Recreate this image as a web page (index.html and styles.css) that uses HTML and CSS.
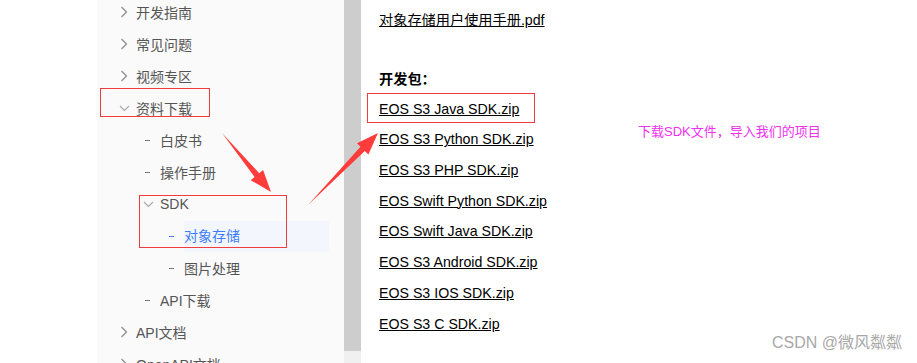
FILE: index.html
```html
<!DOCTYPE html>
<html lang="zh-CN">
<head>
    <meta charset="UTF-8">
    <title>资料下载</title>
    <link rel="stylesheet" href="styles.css">
</head>
<body>
    <div class="page">
        <div class="blank"></div>
        <nav class="sidebar">
            <div class="row lv1"><span class="ico"><svg width="8" height="12" viewBox="0 0 8 12"><path d="M1.5 1 L6.5 6 L1.5 11" fill="none" stroke="#8a8a8a" stroke-width="1.2"/></svg></span>开发指南</div>
            <div class="row lv1"><span class="ico"><svg width="8" height="12" viewBox="0 0 8 12"><path d="M1.5 1 L6.5 6 L1.5 11" fill="none" stroke="#8a8a8a" stroke-width="1.2"/></svg></span>常见问题</div>
            <div class="row lv1"><span class="ico"><svg width="8" height="12" viewBox="0 0 8 12"><path d="M1.5 1 L6.5 6 L1.5 11" fill="none" stroke="#8a8a8a" stroke-width="1.2"/></svg></span>视频专区</div>
            <div class="row lv1"><span class="ico down"><svg width="11" height="7" viewBox="0 0 11 7"><path d="M1 1 L5.5 5.5 L10 1" fill="none" stroke="#aaa" stroke-width="1.2"/></svg></span>资料下载</div>
            <div class="row lv2"><span class="ico"><i class="dash"></i></span>白皮书</div>
            <div class="row lv2"><span class="ico"><i class="dash"></i></span>操作手册</div>
            <div class="row lv2 sdk"><span class="ico down"><svg width="11" height="7" viewBox="0 0 11 7"><path d="M1 1 L5.5 5.5 L10 1" fill="none" stroke="#aaa" stroke-width="1.2"/></svg></span>SDK</div>
            <div class="row lv3 active"><span class="ico"><i class="dash"></i></span><span class="label">对象存储</span></div>
            <div class="row lv3"><span class="ico"><i class="dash"></i></span>图片处理</div>
            <div class="row lv2"><span class="ico"><i class="dash"></i></span>API下载</div>
            <div class="row lv1"><span class="ico"><svg width="8" height="12" viewBox="0 0 8 12"><path d="M1.5 1 L6.5 6 L1.5 11" fill="none" stroke="#8a8a8a" stroke-width="1.2"/></svg></span>API文档</div>
            <div class="row lv1"><span class="ico"><svg width="8" height="12" viewBox="0 0 8 12"><path d="M1.5 1 L6.5 6 L1.5 11" fill="none" stroke="#8a8a8a" stroke-width="1.2"/></svg></span>OpenAPI文档</div>
        </nav>
        <div class="scrollbar">
            <div class="thumb"></div>
            <div class="track-end"></div>
        </div>
        <main class="content">
            <p class="file"><a href="#">对象存储用户使用手册.pdf</a></p>
            <p class="heading">开发包：</p>
            <ul class="links">
                <li><a href="#">EOS S3 Java SDK.zip</a></li>
                <li><a href="#">EOS S3 Python SDK.zip</a></li>
                <li><a href="#">EOS S3 PHP SDK.zip</a></li>
                <li><a href="#">EOS Swift Python SDK.zip</a></li>
                <li><a href="#">EOS Swift Java SDK.zip</a></li>
                <li><a href="#">EOS S3 Android SDK.zip</a></li>
                <li><a href="#">EOS S3 IOS SDK.zip</a></li>
                <li><a href="#">EOS S3 C SDK.zip</a></li>
            </ul>
        </main>
    </div>

    <!-- annotations drawn over the screenshot -->
    <svg class="arrows" width="917" height="363" viewBox="0 0 917 363">
        <rect x="100.5" y="88.5" width="109" height="28" fill="none" stroke="#f03c3c"/>
        <rect x="139.5" y="195.5" width="147" height="52" fill="none" stroke="#f03c3c"/>
        <rect x="367.5" y="93.5" width="167" height="29" fill="none" stroke="#f03c3c"/>
        <polygon points="222,133 254.6,177 250.7,180.2 271,192 263.1,170 259.2,173.2" fill="#ff3b3b"/>
        <polygon points="308,205 364.8,150.9 368.4,154.4 378,133 357,143.2 360.5,146.7" fill="#ff3b3b"/>
    </svg>
    <div class="note">下载SDK文件，导入我们的项目</div>
    <div class="watermark">CSDN @微风粼粼</div>
</body>
</html>
```

FILE: styles.css
```css
body {
    margin: 0;
    background: #fff;
    font-family: "Liberation Sans", "Noto Sans CJK SC", sans-serif;
    overflow: hidden;
}
.page {
    display: flex;
    height: 363px;
}
.blank {
    width: 97px;
    flex-shrink: 0;
}
.sidebar {
    width: 247px;
    flex-shrink: 0;
    background: #fafafa;
    margin-top: -4px;
    font-size: 14px;
    color: #555;
}
.row {
    height: 32px;
    display: flex;
    align-items: center;
    white-space: nowrap;
}
.ico {
    width: 16px;
    height: 32px;
    display: flex;
    align-items: center;
    flex-shrink: 0;
}
.lv1 {
    padding-left: 23px;
}
.lv1 .down {
    margin-left: -1px;
    width: 17px;
}
.lv2 {
    padding-left: 48px;
}
.lv2 .ico {
    width: 15px;
}
.sdk {
    padding-left: 46px;
}
.sdk .ico {
    width: 17px;
}
.lv3 {
    padding-left: 72px;
}
.lv3 .ico {
    width: 15px;
}
.dash {
    display: block;
    width: 5px;
    height: 1px;
    background: #777;
}
.active .dash {
    background: #3d7eff;
}
.active .label {
    flex: 1;
    height: 31px;
    line-height: 31px;
    margin-right: 15px;
    background: #f3f6fc;
    color: #3d7eff;
}
.scrollbar {
    width: 17px;
    flex-shrink: 0;
    display: flex;
    flex-direction: column;
}
.thumb {
    flex: 1;
    background: #cdcdcd;
}
.track-end {
    height: 12px;
    background: #f0f0f0;
}
.content {
    flex: 1;
    padding: 5px 0 0 18px;
    font-size: 14.2px;
    color: #000;
}
.content a {
    color: #000;
    text-decoration: underline;
}
.file {
    margin: 0;
    height: 30px;
    line-height: 30px;
}
.heading {
    margin: 30px 0 0;
    height: 28.7px;
    line-height: 28px;
    font-weight: bold;
}
.links {
    list-style: none;
    margin: 0;
    padding: 0;
}
.links li {
    height: 30.7px;
    line-height: 30.7px;
}
.arrows {
    position: absolute;
    left: 0;
    top: 0;
}
.note {
    position: absolute;
    left: 638px;
    top: 123px;
    font-size: 13px;
    line-height: 18px;
    color: #f030f0;
}
.watermark {
    position: absolute;
    right: 15px;
    top: 333px;
    font-size: 16px;
    line-height: 20px;
    color: #a8a8a8;
}
```
